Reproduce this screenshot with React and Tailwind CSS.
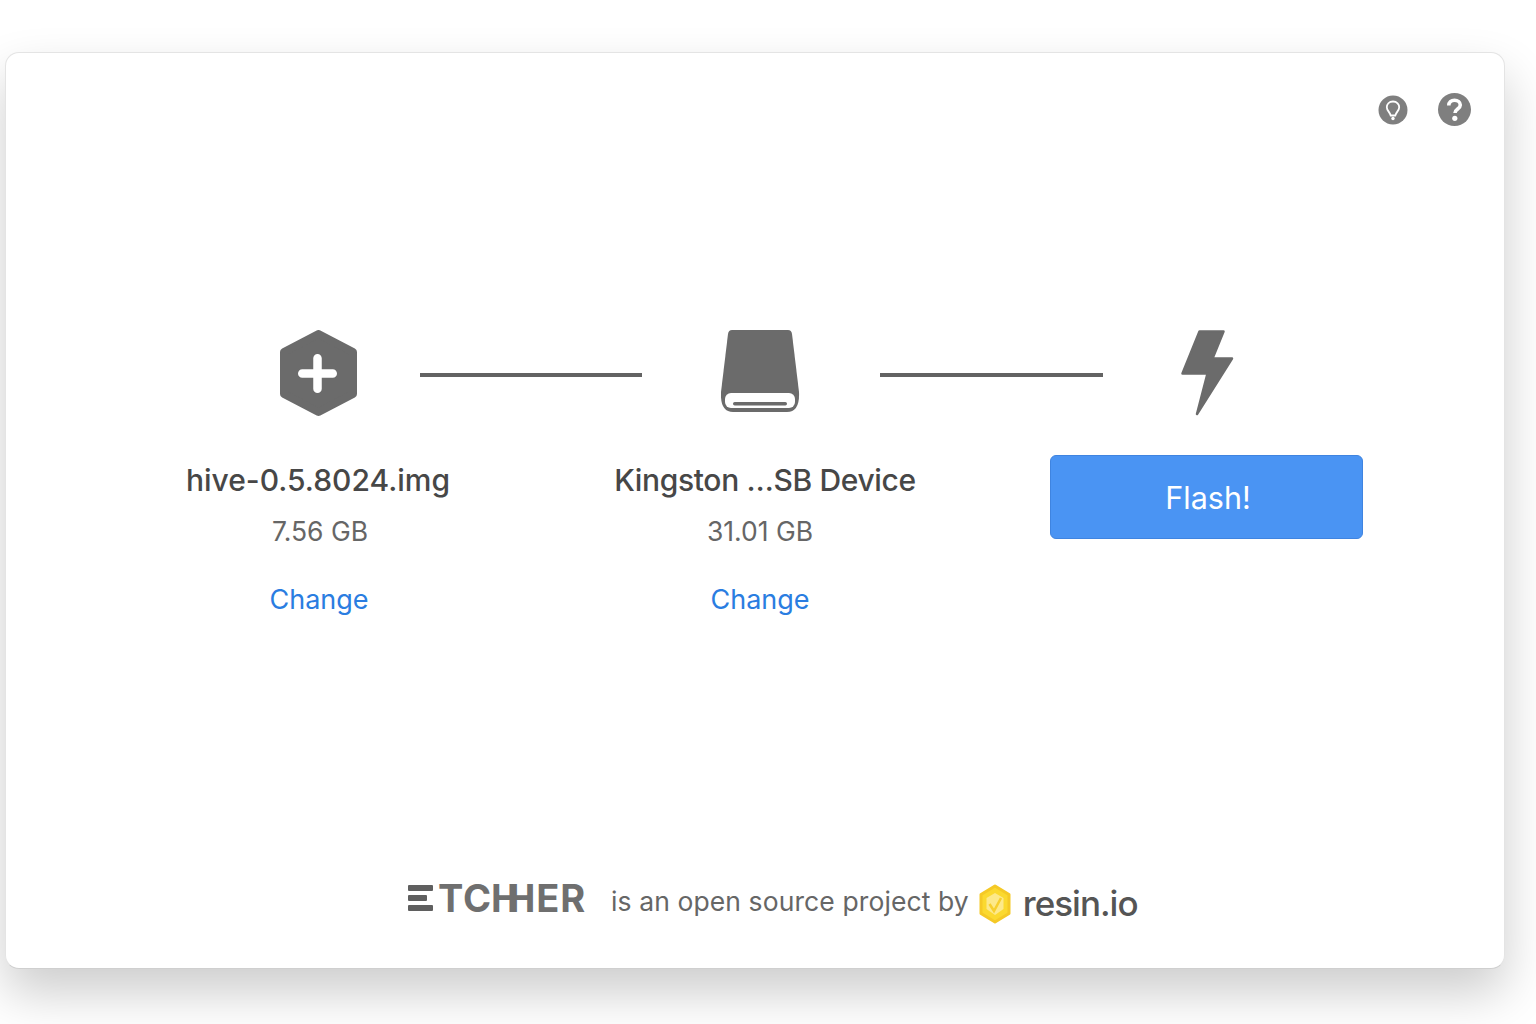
import React from 'react';

const GREY = '#6b6b6b';

function Hexagon() {
    return (
        <svg width="80" height="88" viewBox="0 0 80 88">
            <path d="M40.500 4 L75 22 L75 64 L40.500 82 L6 64 L6 22 Z" fill={GREY} stroke={GREY} strokeWidth="8" strokeLinejoin="round" />
            <path d="M39.500 28.250 V 58.750 M24.250 43.500 H 54.750" stroke="#fff" strokeWidth="8.500" strokeLinecap="round" fill="none" />
        </svg>
    );
}

function Drive() {
    return (
        <svg width="80" height="88" viewBox="0 0 80 88">
            <path d="M11 0 H67 Q70.500 0 71 4 L78 62 Q79 82 66 82 H12 Q-1 82 0 62 L7 4 Q7.500 0 11 0 Z" fill={GREY} />
            <rect x="4" y="63" width="70" height="15" rx="6" fill="#fff" />
            <rect x="12" y="72" width="54" height="3.500" rx="1.700" fill={GREY} />
        </svg>
    );
}

function Bolt() {
    return (
        <svg width="54" height="88" viewBox="0 0 54 88">
            <path d="M19.500 1.500 H43.500 L32.500 28.500 H52 L17 84 L27.500 43.500 H2.500 Z" fill={GREY} stroke={GREY} strokeWidth="2.500" strokeLinejoin="round" />
        </svg>
    );
}

function BulbIcon() {
    return (
        <svg width="30" height="30" viewBox="0 0 30 30">
            <circle cx="15" cy="15" r="14.500" fill="#7f7f7f" />
            <path d="M15 6.500 C11 6.500 8.800 9.300 8.800 12.200 C8.800 15.500 11.800 17 12.700 20.500 H17.300 C18.200 17 21.200 15.500 21.200 12.200 C21.200 9.300 19 6.500 15 6.500 Z" fill="#7f7f7f" stroke="#fff" strokeWidth="1.800" />
            <circle cx="15" cy="23.500" r="1.700" fill="#fff" />
        </svg>
    );
}

function QuestionIcon() {
    return (
        <svg width="33" height="33" viewBox="0 0 33 33">
            <circle cx="16.500" cy="16.500" r="16.500" fill="#7f7f7f" />
            <path d="M10.800 12.500 C10.800 9 13.200 7.200 16.500 7.200 C19.800 7.200 22.300 9.200 22.300 12 C22.300 16 17 16 17 20" fill="none" stroke="#fff" strokeWidth="3.600" />
            <circle cx="16.800" cy="25.300" r="2.600" fill="#fff" />
        </svg>
    );
}

function ResinLogo() {
    return (
        <svg width="34" height="40" viewBox="0 0 34 40">
            <path d="M17 2 L31 10.500 V29.500 L17 38 L3 29.500 V10.500 Z" fill="#fbd92f" stroke="#f5c926" strokeWidth="3" strokeLinejoin="round" />
            <path d="M17 9 L25.500 14 V25 L17 31 L8.500 25 V14 Z" fill="#fde98a" />
            <path d="M11.500 20 L16 27 L23 14" fill="none" stroke="#f7cf2e" strokeWidth="2.500" />
        </svg>
    );
}

function EtcherLogo() {
    return (
        <div className="mb-[8px] flex w-[177px] items-center text-[#6f6f6f]">
            <div className="mr-[5px] flex w-[25px] shrink-0 flex-col gap-[4px]">
                <div className="h-[6px] w-full rounded-[1px] bg-[#5f5f5f]" />
                <div className="h-[6px] w-[19px] rounded-[1px] bg-[#5f5f5f]" />
                <div className="h-[6px] w-full rounded-[1px] bg-[#5f5f5f]" />
            </div>
            {/* the two H's are merged in the wordmark */}
            <span className="whitespace-nowrap text-[38px] font-bold leading-[40px] tracking-[0.8px]">
                TC<span className="ml-[-1px]">H</span><span className="ml-[-13px]">H</span>ER
            </span>
        </div>
    );
}

function Step({ name, size, wide }) {
    return (
        <div className={`flex flex-col items-center pt-[7px] ${wide ? 'w-[300px] ml-[142px]' : 'w-[300px]'}`}>
            <div className={`text-[30px] leading-9 font-medium text-[#474747] whitespace-nowrap ${wide ? 'pl-[10px] tracking-[-0.35px]' : ''}`}>{name}</div>
            <div className={`mt-[17px] text-[26.500px] leading-8 text-[#666] ${wide ? '' : 'pl-[4px]'}`}>{size}</div>
            <a className={`mt-[37px] text-[27px] leading-8 text-[#2a7de1] ${wide ? '' : 'pl-[2px]'}`}>Change</a>
        </div>
    );
}

export default function App() {
    return (
        <div className="h-[1024px] overflow-hidden bg-white pt-[52px] pl-[5px] font-['Inter',sans-serif]">
            <div className="box-border flex h-[917px] w-[1500px] flex-col rounded-[14px] border border-[#e4e4e4] border-b-[#cfcfcf] bg-white shadow-[0_24px_50px_rgba(0,0,0,0.2)]">
                {/* Header */}
                <div className="flex items-center justify-end gap-[30px] pt-[40px] pr-[33px]">
                    <BulbIcon />
                    <QuestionIcon />
                </div>

                {/* Icons and connectors */}
                <div className="mt-[204px] flex items-center pl-[210px]">
                    <div className="flex w-[204px] justify-center"><Hexagon /></div>
                    <div className="mt-[2px] h-1 w-[222px] bg-[#636363]" />
                    <div className="flex w-[238px] justify-center"><Drive /></div>
                    <div className="mt-[2px] h-1 w-[223px] bg-[#636363]" />
                    <div className="flex w-[208px] justify-center"><Bolt /></div>
                </div>

                {/* Labels and action */}
                <div className="mt-[37px] flex items-start pl-[162px]">
                    <Step name="hive-0.5.8024.img" size="7.56 GB" />
                    <Step name="Kingston …SB Device" size="31.01 GB" wide />
                    <button className="ml-[140px] h-[84px] w-[313px] rounded-[6px] border border-[#3f84e0] bg-[#4a94f3] pt-[1px] pl-[3px] text-[30.500px] text-white">Flash!</button>
                </div>

                {/* Footer */}
                <div className="mt-auto mb-[41px] flex h-[50px] items-center pl-[402px]">
                    <EtcherLogo />
                    <span className="ml-[26px] text-[26.500px] tracking-[0.1px] text-[#666] whitespace-nowrap">is an open source project by</span>
                    <div className="ml-[9px] mt-[4px]"><ResinLogo /></div>
                    <span className="ml-[11px] mt-[2px] text-[35px] font-medium leading-10 tracking-[-1px] text-[#555]">resin.io</span>
                </div>
            </div>
        </div>
    );
}
